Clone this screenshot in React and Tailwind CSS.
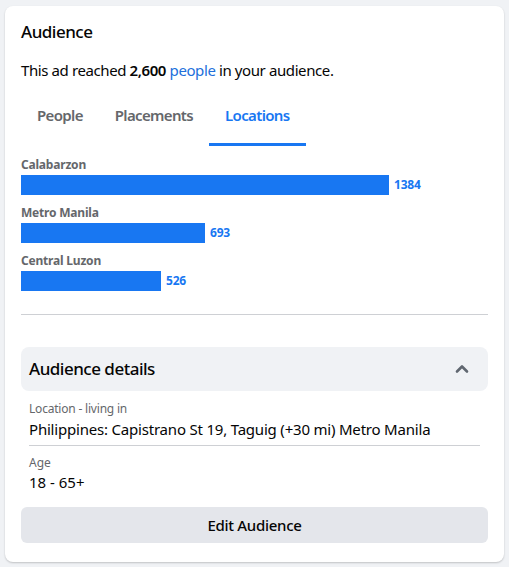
import React from 'react';

const locations = [
  { name: 'Calabarzon', value: 1384 },
  { name: 'Metro Manila', value: 693 },
  { name: 'Central Luzon', value: 526 },
];

const tabs = ['People', 'Placements', 'Locations'];

const ChevronUp = () => (
  <svg width="16" height="16" viewBox="0 0 16 16" fill="none">
    <path d="M3 10.5 8 5.5l5 5" stroke="#606770" strokeWidth="2.6" strokeLinecap="round" strokeLinejoin="round" />
  </svg>
);

export default function App() {
  const active = 'Locations';
  return (
    <div
      className="min-h-[567px] bg-[#f0f2f5] px-[5px] pt-[6px] pb-[4px]"
      style={{ fontFamily: '"Segoe UI", "Noto Sans", Helvetica, Arial, sans-serif' }}
    >
      <div className="bg-white rounded-lg shadow-[0_1px_2px_rgba(0,0,0,0.2)] px-4 pt-[14px] pb-[19px]">
        <h2 className="text-[17px] font-medium text-[#050505] leading-[24px] tracking-[-0.5px]">Audience</h2>

        <p className="mt-[16px] text-[15px] text-[#050505] leading-[20px] tracking-[-0.4px]">
          This ad reached <span className="font-semibold">2,600</span>{' '}
          <span className="text-[#216fdb]">people</span> in your audience.
        </p>

        <div className="mt-[8px] flex">
          {tabs.map((t) => (
            <div key={t} className="flex flex-col">
              <div
                className={`px-4 h-[55px] flex items-center text-[15px] font-semibold tracking-[-0.65px] ${
                  t === active ? 'text-[#1877f2]' : 'text-[#65676b]'
                }`}
              >
                {t}
              </div>
              <div className={`h-[3px] ${t === active ? 'bg-[#1877f2]' : 'bg-transparent'}`} />
            </div>
          ))}
        </div>

        <div className="mt-[11px] flex flex-col gap-[10px]">
          {locations.map((l) => (
            <div key={l.name}>
              <div className="text-[12px] font-bold text-[#65676b] leading-[16px] tracking-[-0.2px]">{l.name}</div>
              <div className="mt-[2px] flex items-center gap-[5px]">
                <div
                  className="h-[20px] bg-[#1877f2]"
                  style={{ width: `${Math.round((l.value * 368) / 1384)}px` }}
                />
                <span className="text-[12px] font-bold text-[#1877f2] tracking-[-0.2px]">{l.value}</span>
              </div>
            </div>
          ))}
        </div>

        <div className="mt-[23px] h-px bg-[#ced0d4]" />

        <div className="mt-[32px] h-[44px] rounded-lg bg-[#f0f2f5] flex items-center justify-between pl-2 pr-[18px]">
          <span className="text-[17px] font-medium text-[#050505] tracking-[-0.5px]">Audience details</span>
          <ChevronUp />
        </div>

        <div className="px-2 pt-[10px]">
          <div className="text-[12px] text-[#65676b] leading-[16px] tracking-[-0.2px]">Location - living in</div>
          <div className="mt-[2px] text-[15px] text-[#050505] leading-[20px] tracking-[-0.2px]">
            Philippines: Capistrano St 19, Taguig (+30 mi) Metro Manila
          </div>
          <div className="mt-[6px] h-px bg-[#ced0d4]" />
          <div className="mt-[9px] text-[12px] text-[#65676b] leading-[16px]">Age</div>
          <div className="mt-[1px] text-[15px] text-[#050505] leading-[20px]">18 - 65+</div>
        </div>

        <button className="mt-[15px] w-full h-[36px] rounded-md bg-[#e4e6eb] text-[15px] font-medium text-[#050505] tracking-[-0.3px]">
          Edit Audience
        </button>
      </div>
    </div>
  );
}
